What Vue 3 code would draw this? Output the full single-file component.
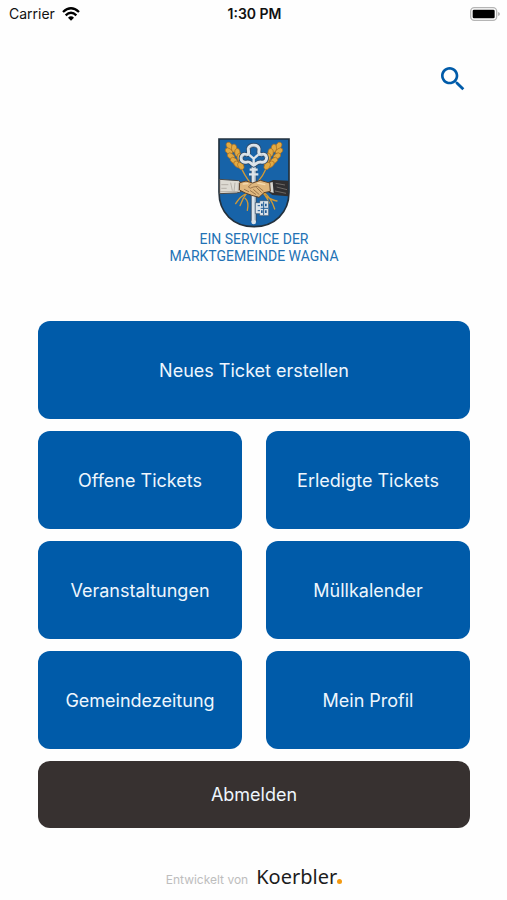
<template>
  <div class="app">

    <!-- Statusleiste -->
    <div class="status-bar">
      <div class="carrier">
        <span>Carrier</span>
        <svg class="wifi" viewBox="0 0 54 42" aria-hidden="true">
          <path d="M3 15 Q27 -7 51 15" />
          <path d="M11 25 Q27 10 43 25" />
          <path class="dot" d="M18 32 Q27 24 36 32 L27 41 Z" />
        </svg>
      </div>
      <div class="time">1:30 PM</div>
      <div class="battery">
        <svg viewBox="0 0 90 42" aria-hidden="true">
          <rect x="2" y="2" width="78" height="38" rx="11" fill="#fff" stroke="#b5b5b5" stroke-width="4" />
          <rect x="8" y="8" width="66" height="26" rx="4" fill="#000" />
          <path d="M84 15 Q90 17 90 21 Q90 25 84 27 Z" fill="#b5b5b5" />
        </svg>
      </div>
    </div>

    <main class="content">
      <div class="toolbar">
        <button class="search-btn" type="button" aria-label="Suche">
          <svg viewBox="0 0 24 24" aria-hidden="true">
            <path d="M15.5 14h-.79l-.28-.27C15.41 12.59 16 11.11 16 9.5 16 5.91 13.09 3 9.5 3S3 5.91 3 9.5 5.91 16 9.5 16c1.61 0 3.09-.59 4.23-1.57l.27.28v.79l5 4.99L20.49 19l-4.99-5zm-6 0C7.01 14 5 11.99 5 9.5S7.01 5 9.5 5 14 7.01 14 9.5 11.99 14 9.5 14z" />
          </svg>
        </button>
      </div>

      <!-- Gemeindewappen -->
      <header class="brand">
        <svg class="crest" viewBox="24 19 216 270" aria-hidden="true">
          <defs>
            <g id="ear">
              <ellipse v-for="g in grains" :key="g.id" :cx="g.x" :cy="g.y" rx="8" ry="12"
                :transform="`rotate(${g.r} ${g.x} ${g.y})`" />
            </g>
          </defs>
          <path d="M27 22 H237 V181 C237 243 194 285 132 285 C70 285 27 243 27 181 Z"
            fill="#1763a8" stroke="#23313d" stroke-width="5" />

          <!-- Ähren -->
          <g fill="none" stroke="#d29a35" stroke-width="4" stroke-linecap="round">
            <path d="M92 104 Q102 130 124 158" />
            <path d="M172 104 Q160 132 140 156" />
            <path d="M116 176 Q98 198 90 222 M110 186 Q92 192 77 216 M105 200 Q118 210 112 236" />
            <path d="M148 174 Q166 186 178 214 M160 181 Q184 198 194 232 M168 194 Q188 206 201 208" />
          </g>
          <g fill="#e2aa42" stroke="#a66a20" stroke-width="2">
            <use href="#ear" transform="translate(76 74) rotate(-30)" />
            <use href="#ear" transform="translate(188 74) rotate(30)" />
          </g>

          <!-- Schlüssel -->
          <g fill="none" stroke-linejoin="round">
            <path d="M131 105 V270" stroke="#334d68" stroke-width="18" />
            <path d="M131 103 V271" stroke="#dce3e9" stroke-width="12" />
            <path d="M135 110 V268" stroke="#8797a7" stroke-width="2" />
            <g stroke="#2d4b6b" stroke-width="14">
              <path d="M131 101 C121 94 120 87 107 92 C87 94 90 62 109 69 C120 70 114 55 115 51 C119 37 144 37 147 51 C148 57 142 69 155 69 C172 62 176 91 157 92 C145 88 142 94 131 101 Z" />
            </g>
            <g stroke="#dce3e9">
              <path stroke-width="9" d="M131 101 C121 94 120 87 107 92 C87 94 90 62 109 69 C120 70 114 55 115 51 C119 37 144 37 147 51 C148 57 142 69 155 69 C172 62 176 91 157 92 C145 88 142 94 131 101 Z" />
              <path stroke-width="7" d="M117 69 L131 81 L145 69 M131 81 V102 M119 114 H143 M117 128 H145" />
            </g>
            <path d="M118 51 Q129 38 143 51 M96 78 Q101 69 110 71 M151 71 Q162 67 166 79"
              stroke="#8a98a5" stroke-width="2" />
          </g>
          <path d="M136 213 H149 V207 H176 V252 H149 V246 H136 Z" fill="#dce3e9" stroke="#314d69" stroke-width="2" />
          <path d="M143 222 H150 M143 237 H150 M161 210 V250 M152 230 H174"
            fill="none" stroke="#225d96" stroke-width="3" />
          <path d="M153 216 H158 V224 H153 Z M165 216 H170 V224 H165 Z M153 236 H158 V244 H153 Z M165 236 H170 V244 H165 Z" fill="#225d96" />
          <circle cx="131" cy="271" r="7" fill="#dce3e9" />

          <!-- Handschlag -->
          <path d="M29 143 L86 147 L94 153 L92 181 L79 184 L29 186 Z" fill="#dedbd3" stroke="#4b4a48" stroke-width="3" />
          <path d="M34 159 H55 M34 170 H50 M62 153 L67 177 M75 153 L72 180 M85 153 V178 M30 180 H86"
            fill="none" stroke="#a19c94" stroke-width="2" />
          <path d="M174 152 L190 145 L235 147 V194 L187 190 L175 181 Z" fill="#302f31" />
          <path d="M177 154 L188 151 L191 184 L179 180 Z" fill="#d8d7d1" />
          <path d="M197 155 L225 160 M200 166 L231 174 M195 178 L228 185" fill="none" stroke="#6d6966" stroke-width="3" />
          <path d="M89 153 L108 148 L128 154 L151 146 L179 154 L181 179 L162 183 L147 197 L125 191 L106 184 L88 175 Z"
            fill="#dfb77e" stroke="#5e4127" stroke-width="3" stroke-linejoin="round" />
          <path d="M124 157 L115 166 Q120 173 130 166 L143 164 L159 177 M121 177 L137 188 M131 174 L147 188 M140 168 L154 182 M103 173 L116 180"
            fill="none" stroke="#7a5532" stroke-width="2" stroke-linecap="round" />
          <path d="M98 157 L115 156 M142 154 L166 159" fill="none" stroke="#f4dab0" stroke-width="4" />
        </svg>
        <p class="brand-text">EIN SERVICE DER<br>MARKTGEMEINDE WAGNA</p>
      </header>

      <!-- Menü -->
      <nav class="menu">
        <button v-for="item in items" :key="item.label" type="button" :class="['tile', item.type]">
          {{ item.label }}
        </button>
      </nav>

      <footer class="credits">
        <span class="credits-label">Entwickelt von</span>
        <span class="credits-logo">Koerbler<i class="logo-dot"></i></span>
      </footer>
    </main>

  </div>
</template>

<script setup>
const items = [
  { label: "Neues Ticket erstellen", type: "wide" },
  { label: "Offene Tickets" },
  { label: "Erledigte Tickets" },
  { label: "Veranstaltungen" },
  { label: "Müllkalender" },
  { label: "Gemeindezeitung" },
  { label: "Mein Profil" },
  { label: "Abmelden", type: "logout" }
]

// Körner einer Ähre, von oben nach unten
const grains = [
  { id: 1, x: 0, y: -36, r: 0 },
  { id: 2, x: -9, y: -23, r: -24 },
  { id: 3, x: 9, y: -23, r: 24 },
  { id: 4, x: -11, y: -7, r: -24 },
  { id: 5, x: 11, y: -7, r: 24 },
  { id: 6, x: -10, y: 9, r: -24 },
  { id: 7, x: 10, y: 9, r: 24 },
  { id: 8, x: -7, y: 24, r: -20 },
  { id: 9, x: 7, y: 24, r: 20 },
  { id: 10, x: 0, y: 33, r: 0 }
]
</script>

<style>
body {
  margin: 0;
  background: #fefefe;
}
</style>

<style scoped>
.app {
  min-height: 100vh;
  font-family: Inter, "Liberation Sans", sans-serif;
  color: #111;
}

.status-bar {
  display: grid;
  grid-template-columns: 1fr auto 1fr;
  align-items: center;
  height: 27px;
  padding: 0 7px 0 9px;
  font-size: 14px;
}

.carrier {
  display: flex;
  align-items: center;
  gap: 7px;
}

.wifi {
  width: 18px;
  height: 14px;
  fill: none;
  stroke: #000;
  stroke-width: 7;
}

.wifi .dot {
  fill: #000;
  stroke: none;
}

.time {
  font-weight: 600;
}

.battery {
  display: flex;
  justify-content: flex-end;
}

.battery svg {
  width: 30px;
  height: 14px;
}

.content {
  padding: 36px 37px 0 38px;
}

.toolbar {
  display: flex;
  justify-content: flex-end;
  padding-right: 1px;
}

.search-btn {
  width: 32px;
  height: 32px;
  padding: 0;
  border: none;
  background: none;
  cursor: pointer;
}

.search-btn svg {
  display: block;
  width: 32px;
  height: 32px;
  fill: #005ba9;
}

.brand {
  display: flex;
  flex-direction: column;
  align-items: center;
  padding-top: 43px;
}

.crest {
  width: 72px;
  height: 90px;
}

.brand-text {
  margin: 3px 0 0;
  font-family: Roboto, sans-serif;
  font-size: 14px;
  line-height: 17px;
  text-align: center;
  color: #2272b5;
}

/* Kacheln */
.menu {
  display: grid;
  grid-template-columns: 1fr 1fr;
  gap: 12px 24px;
  margin-top: 56px;
}

.tile {
  height: 98px;
  padding: 0;
  border: none;
  border-radius: 12px;
  background: #005ba9;
  color: #eef6fd;
  font-family: inherit;
  font-size: 18px;
  cursor: pointer;
}

.wide,
.logout {
  grid-column: 1 / -1;
}

.logout {
  height: 67px;
  background: #373130;
}

.credits {
  display: flex;
  justify-content: center;
  align-items: baseline;
  gap: 8px;
  margin-top: 34px;
}

.credits-label {
  font-size: 12px;
  color: #bdbdbd;
}

.credits-logo {
  font-family: "Noto Sans", sans-serif;
  font-size: 20px;
  line-height: 30px;
  color: #1c1c1c;
}

.logo-dot {
  display: inline-block;
  width: 5px;
  height: 5px;
  border-radius: 50%;
  background: #f39a12;
}
</style>
